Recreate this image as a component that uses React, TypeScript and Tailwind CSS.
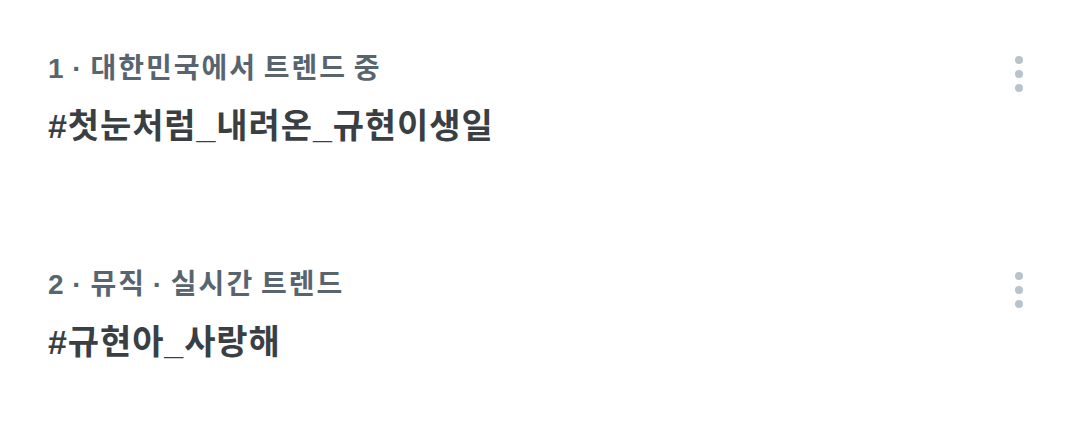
const trends = [
  { meta: '1 · 대한민국에서 트렌드 중', tag: '#첫눈처럼_내려온_규현이생일' },
  { meta: '2 · 뮤직 · 실시간 트렌드', tag: '#규현아_사랑해' },
];

function MoreDots() {
  return (
    <div className="mt-[3px] flex flex-col gap-[6px]">
      <span className="block h-2 w-2 rounded-full bg-[#b9c3cb]" />
      <span className="block h-2 w-2 rounded-full bg-[#b9c3cb]" />
      <span className="block h-2 w-2 rounded-full bg-[#b9c3cb]" />
    </div>
  );
}

export default function App() {
  return (
    <div
      className="min-h-[427px] w-full bg-white"
      style={{ fontFamily: '"Liberation Sans", "Noto Sans CJK KR", sans-serif' }}
    >
      {trends.map((t) => (
        <div key={t.tag} className="flex h-[216px] items-start justify-between pl-12 pr-[57px] pt-[53px]">
          <div className="flex flex-col gap-[20px]">
            <p className="text-[28px] font-bold leading-8 tracking-[2px] [word-spacing:-3px] text-[#58656f]">{t.meta}</p>
            <p className="text-[34px] font-bold leading-[42px] tracking-[0.9px] text-[#3a3f44]">{t.tag}</p>
          </div>
          <MoreDots />
        </div>
      ))}
    </div>
  );
}
